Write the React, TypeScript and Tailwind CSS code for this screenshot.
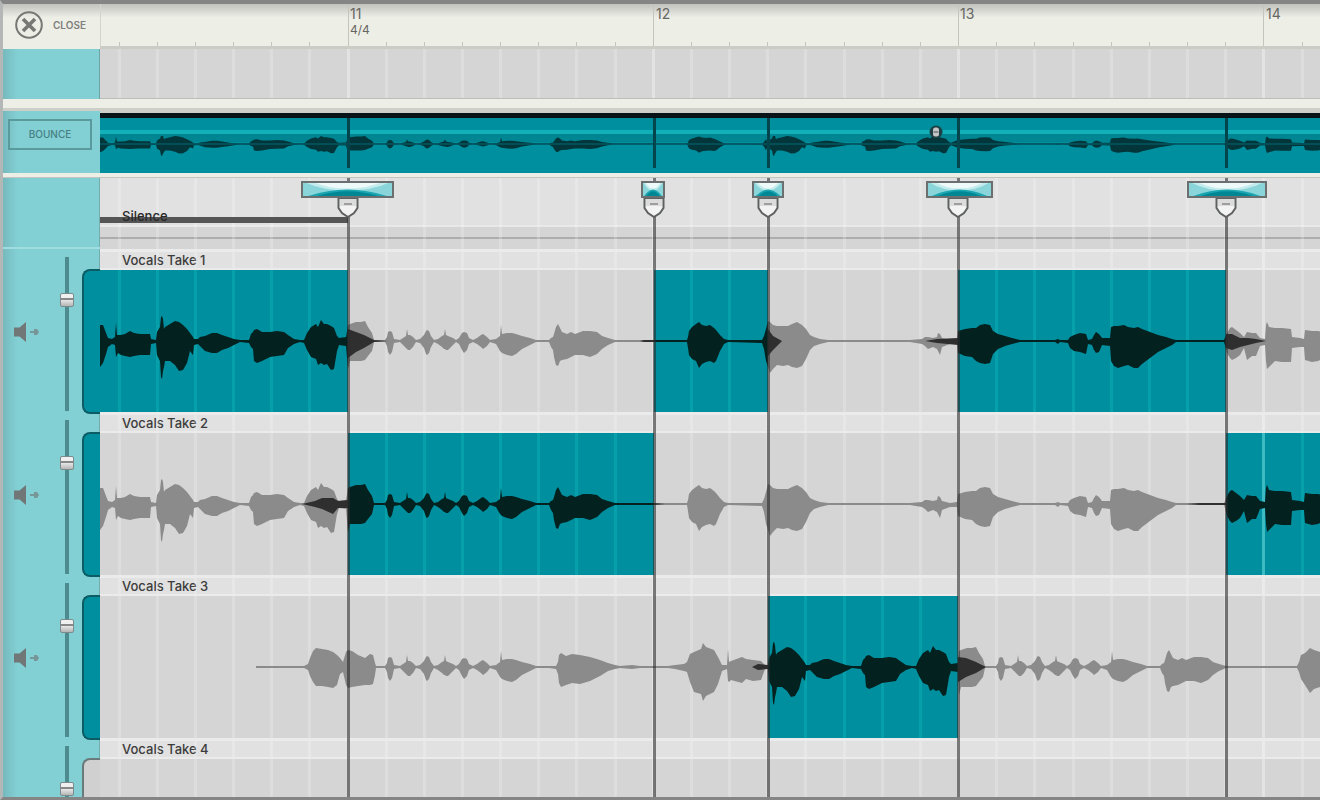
import { useState } from 'react';

// [x, peak above the centre line, peak below it]
type Point = [number, number, number];

interface Region {
  from: number;
  to: number;
}

interface Take {
  name: string;
  wave: Point[];
  regions: Region[];
  tails: Point[][];
  selectable: boolean;
}

// x values are window based, the timeline itself starts after the sidebar
const SIDEBAR = 100;
const BEATS_PER_BAR = 8;

const PHRASES: Point[] = [
  [348, 16, 28], [350, 17, 20], [356, 19, 20], [361, 19, 20], [365, 20, 19], [368, 14, 15], [372, 8, 10], [374, 1, 1],
  [385, 1, 1], [387, 4, 5], [388, 9, 11], [390, 10, 14], [392, 9, 11], [394, 2, 2], [400, 1, 1], [403, 3, 4],
  [406, 5, 7], [407, 12, 8], [408, 6, 9], [410, 6, 9], [413, 4, 6], [416, 1, 1], [420, 2, 2], [424, 6, 7],
  [426, 10, 13], [427, 11, 14], [429, 10, 12], [431, 5, 6], [434, 1, 1], [438, 2, 3], [442, 5, 6], [444, 6, 8],
  [445, 12, 8], [446, 6, 9], [448, 5, 9], [453, 3, 4], [456, 1, 1], [459, 3, 3], [462, 8, 9], [464, 9, 12],
  [467, 8, 9], [469, 3, 3], [473, 1, 1], [477, 3, 3], [481, 6, 6], [483, 7, 8], [487, 4, 5], [490, 1, 1],
  [496, 2, 3], [500, 5, 10], [501, 16, 11], [502, 7, 12], [507, 8, 14], [512, 8, 15], [516, 7, 13], [522, 5, 8],
  [530, 3, 4], [536, 1, 1], [549, 1, 1], [551, 3, 6], [553, 4, 9], [554, 7, 16], [556, 14, 24], [558, 17, 25],
  [560, 13, 20], [562, 9, 19], [567, 7, 18], [571, 9, 16], [575, 7, 14], [583, 10, 14], [590, 10, 16], [597, 9, 13],
  [602, 5, 8], [608, 3, 4], [615, 1, 1],
];

const OPENING: Point[] = [
  [156, 1, 2], [157, 9, 14], [160, 14, 20], [161, 24, 36], [162, 25, 38], [163, 22, 30], [164, 12, 26], [165, 14, 20],
  [170, 17, 20], [175, 20, 24], [179, 19, 30], [183, 16, 29], [187, 12, 22], [190, 8, 10], [193, 4, 14], [194, 2, 4],
  [198, 2, 3], [200, 4, 5], [205, 5, 10], [212, 8, 12], [217, 8, 12], [222, 6, 9], [228, 4, 7], [234, 2, 4],
  [240, 1, 1], [249, 1, 2], [251, 7, 6], [253, 9, 8], [254, 11, 20], [257, 12, 22], [262, 9, 20], [270, 9, 16],
  [277, 10, 15], [284, 9, 14], [288, 6, 7], [294, 2, 3], [300, 1, 1], [304, 1, 2], [307, 8, 9], [311, 14, 16],
  [316, 17, 18], [318, 14, 24], [321, 21, 22], [324, 17, 24], [327, 17, 23], [331, 15, 29], [334, 13, 28], [337, 5, 10],
  [339, 3, 4], [346, 4, 5],
];

const MAIN_WAVE: Point[] = [
  [100, 16, 26], [103, 16, 22], [106, 8, 13], [108, 3, 6], [112, 2, 3], [115, 4, 4], [116, 18, 16], [117, 6, 14],
  [118, 6, 12], [121, 6, 14], [125, 7, 15], [130, 10, 16], [134, 8, 15], [140, 7, 14], [150, 7, 14], [151, 2, 3],
  ...OPENING,
  ...PHRASES,
  [687, 1, 1], [688, 4, 7], [689, 10, 14], [692, 14, 18], [696, 17, 20], [699, 19, 27], [702, 16, 23], [706, 15, 21],
  [710, 16, 20], [714, 13, 22], [716, 11, 20], [720, 6, 10], [724, 2, 3], [728, 1, 1], [762, 1, 2], [764, 5, 8],
  [766, 12, 20], [768, 20, 26], [770, 19, 32], [773, 16, 28], [777, 15, 24], [783, 15, 25], [788, 15, 24], [792, 17, 26],
  [797, 19, 27], [802, 16, 25], [806, 12, 18], [810, 6, 9], [814, 4, 5], [820, 2, 3], [828, 1, 1], [910, 1, 1],
  [922, 2, 3], [925, 4, 5], [928, 4, 8], [933, 3, 6], [937, 4, 8], [938, 8, 10], [940, 7, 14], [942, 3, 6],
  [950, 1, 3], [957, 2, 3], [958, 10, 12], [965, 12, 15], [972, 13, 16], [976, 13, 20], [980, 16, 22], [985, 17, 23],
  [990, 16, 22], [993, 10, 13], [998, 7, 8], [1005, 5, 5], [1012, 3, 3], [1020, 1, 1], [1055, 1, 1], [1058, 2, 3],
  [1060, 1, 1], [1068, 1, 2], [1070, 4, 7], [1074, 6, 10], [1080, 8, 11], [1086, 7, 13], [1088, 1, 3], [1092, 2, 4],
  [1094, 6, 9], [1096, 9, 12], [1099, 7, 11], [1102, 3, 4], [1110, 3, 5], [1111, 14, 20], [1114, 15, 25], [1118, 15, 27],
  [1124, 16, 25], [1128, 14, 24], [1134, 13, 27], [1138, 14, 27], [1142, 12, 23], [1150, 9, 17], [1158, 6, 11],
  [1166, 4, 7], [1172, 2, 4], [1176, 1, 1], [1224, 1, 1], [1227, 8, 12], [1230, 13, 17], [1232, 14, 19], [1236, 11, 17],
  [1240, 8, 14], [1244, 4, 7], [1247, 9, 19], [1252, 8, 15], [1256, 8, 15], [1260, 3, 5], [1265, 2, 4], [1266, 16, 20],
  [1267, 19, 28], [1269, 14, 26], [1275, 13, 20], [1282, 13, 21], [1291, 12, 21], [1292, 4, 7], [1300, 3, 6],
  [1304, 2, 6], [1305, 11, 19], [1312, 10, 21], [1318, 10, 20], [1326, 8, 16], [1330, 1, 1],
];

const shift = (points: Point[], by: number): Point[] => points.map(([x, up, down]) => [x + by, up, down]);
const slice = (points: Point[], from: number, to: number) => points.filter(([x]) => x >= from && x <= to);

const THIRD_WAVE: Point[] = [
  [256, 1, 1], [304, 1, 1], [308, 3, 3], [310, 9, 9], [313, 16, 15], [316, 19, 19], [322, 18, 19], [328, 17, 20],
  [333, 15, 21], [337, 12, 18], [340, 9, 7], [343, 5, 5], [346, 15, 18], [348, 17, 21], [352, 16, 20], [358, 12, 19],
  [365, 9, 18], [370, 13, 18], [373, 12, 17], [375, 4, 8], [376, 1, 1],
  ...slice(PHRASES, 384, 549),
  [556, 1, 2], [558, 5, 7], [559, 12, 16], [561, 14, 20], [566, 11, 18], [572, 13, 16], [580, 12, 17], [590, 10, 14],
  [600, 7, 9], [608, 4, 4], [615, 2, 2], [620, 1, 1], [632, 2, 2], [640, 1, 1], [668, 1, 1], [675, 2, 2],
  [684, 3, 4], [687, 5, 5], [690, 13, 15], [694, 15, 25], [701, 18, 27], [703, 24, 34], [706, 20, 29], [714, 17, 25],
  [718, 10, 17], [722, 2, 4], [727, 2, 2], [728, 18, 14], [729, 5, 15], [731, 6, 13], [742, 10, 16], [746, 8, 12],
  [753, 7, 14], [761, 6, 13], [765, 2, 2],
  ...shift(OPENING, 612),
  ...shift(PHRASES, 611),
  [1297, 1, 1], [1299, 5, 5], [1301, 12, 12], [1305, 14, 18], [1310, 19, 26], [1314, 17, 22], [1320, 15, 20], [1330, 1, 1],
];

const BOUNCE_WAVE: Point[] = [
  ...slice(MAIN_WAVE, 100, 767),
  ...slice(THIRD_WAVE, 768, 957),
  ...slice(MAIN_WAVE, 958, 1330),
].map(([x, up, down]) => [x, Math.min(up * 0.4, 8), Math.min(down * 0.32, 12)]);

const TAKES: Take[] = [
  {
    name: 'Vocals Take 1',
    wave: MAIN_WAVE,
    regions: [{ from: 100, to: 348 }, { from: 654, to: 768 }, { from: 958, to: 1226 }],
    tails: [
      [[348, 12, 17], [356, 9, 11], [364, 6, 7], [374, 1, 1], [388, 0, 0]],
      [[640, 0, 0], [644, 1, 1], [654, 1, 1]],
      [[768, 12, 15], [773, 5, 9], [782, 0, 0]],
      [[925, 0, 0], [937, 2, 2], [958, 3, 4]],
      [[1226, 7, 7], [1232, 7, 9], [1240, 3, 6], [1248, 3, 4], [1256, 2, 2], [1266, 0, 0]],
    ],
    selectable: true,
  },
  {
    name: 'Vocals Take 2',
    wave: MAIN_WAVE,
    regions: [{ from: 348, to: 654 }, { from: 1226, to: 1400 }],
    tails: [
      [[302, 0, 0], [315, 3, 3], [322, 6, 5], [333, 6, 10], [338, 3, 4], [348, 4, 4]],
      [[654, 1, 1], [665, 0, 0]],
      [[1187, 0, 0], [1200, 1, 1], [1226, 1, 1]],
    ],
    selectable: true,
  },
  {
    name: 'Vocals Take 3',
    wave: THIRD_WAVE,
    regions: [{ from: 768, to: 958 }],
    tails: [
      [[752, 0, 0], [758, 3, 3], [768, 2, 2]],
      [[958, 10, 15], [966, 9, 10], [976, 5, 6], [986, 0, 0]],
    ],
    selectable: true,
  },
  { name: 'Vocals Take 4', wave: [], regions: [], tails: [], selectable: false },
];

const BARS = [
  { x: 348, label: '11', meter: '4/4' },
  { x: 654, label: '12' },
  { x: 958, label: '13' },
  { x: 1264, label: '14' },
];

const EDITS = [
  { x: 348, left: 301, width: 93 },
  { x: 654, left: 641, width: 24 },
  { x: 768, left: 752, width: 32 },
  { x: 958, left: 926, width: 67 },
  { x: 1226, left: 1187, width: 80 },
];

const BEATS = Array.from({ length: 36 }, (_, i) => ({
  x: Math.floor(348 + ((i - 6) * 305.3) / BEATS_PER_BAR),
  bar: (i - 6) % BEATS_PER_BAR === 0,
}));

function wavePath(points: Point[]) {
  const top = points.map(([x, up]) => `${x} ${-up}`);
  const bottom = points.map(([x, , down]) => `${x} ${down}`).reverse();
  return `M${[...top, ...bottom].join('L')}Z`;
}

function Grid() {
  return (
    <div className="pointer-events-none absolute inset-0 overflow-hidden">
      {BEATS.map((beat) => (
        <div
          key={beat.x}
          className={beat.bar ? 'absolute inset-y-0 w-[3px] bg-white/35' : 'absolute inset-y-0 w-[3px] bg-white/20'}
          style={{ left: beat.x - 1 - SIDEBAR }}
        />
      ))}
    </div>
  );
}

function CloseIcon() {
  return (
    <svg className="h-7 w-7" viewBox="0 0 28 28" fill="none" stroke="#777874">
      <circle cx="14" cy="14" r="12.8" strokeWidth="2" />
      <path d="M8 8L20 20M20 8L8 20" strokeWidth="3.600" />
    </svg>
  );
}

function SpeakerIcon() {
  return (
    <svg className="h-5 w-[26px]" viewBox="0 0 26 20" fill="#717777">
      <path d="M0 5.5h5.5L12 0v20l-6.500-5.500H0Z" />
      <path d="M16 9h4V7h3l2 3-2 3h-3v-2h-4Z" opacity="0.65" />
    </svg>
  );
}

function Ruler() {
  return (
    <div className="relative flex-1 overflow-hidden border-b-[3px] border-l border-[#cbccc5] border-l-[#d3d4cd]">
      {BEATS.map((beat) => (
        <div
          key={beat.x}
          className={beat.bar ? 'absolute inset-y-0 w-px bg-[#c4c5bf]' : 'absolute bottom-0 h-1 w-px bg-[#c4c5bf]'}
          style={{ left: beat.x - SIDEBAR - 1 }}
        />
      ))}
      {BARS.map((bar) => (
        <div
          key={bar.label}
          className="absolute top-0.5 text-sm text-[#666763]"
          style={{ left: bar.x + 1 - SIDEBAR }}
        >
          <div className="leading-4">{bar.label}</div>
          {bar.meter && <div className="text-xs leading-4">{bar.meter}</div>}
        </div>
      ))}
    </div>
  );
}

function BounceTrack() {
  return (
    <div className="relative flex-1 overflow-hidden border-t-[5px] border-[#081417] bg-[#008f9e]">
      <div className="absolute inset-x-0 top-3 h-1 bg-[#12b0b8]" />
      <div className="absolute inset-x-0 top-4 h-2 bg-[#008592]" />
      <svg className="absolute left-0 top-3 h-7 w-[1230px]" viewBox="100 -14 1230 28" fill="#03363b">
        <path d={wavePath(BOUNCE_WAVE)} />
        <path d="M100 0H1330" stroke="#045963" strokeWidth="1.500" />
      </svg>
      {EDITS.map((edit) => (
        <div
          key={edit.x}
          className="absolute top-0 h-[50px] w-[3px] bg-[#04444c]"
          style={{ left: edit.x - 1 - SIDEBAR }}
        />
      ))}
      <svg className="absolute left-[829px] top-[7px] h-3.5 w-3.5" viewBox="0 0 14 14">
        <circle cx="7" cy="7" r="6.500" fill="#1d4044" />
        <rect x="4" y="2.500" width="6" height="9" rx="2.500" fill="#c3c6c5" />
        <path d="M4.500 7H9.500" stroke="#6f7776" strokeWidth="1.500" />
      </svg>
    </div>
  );
}

function EditHandle({ x, left, width }: { x: number; left: number; width: number }) {
  return (
    <>
      <div className="absolute inset-y-0 w-[3px] bg-[#2c2c2c]/60" style={{ left: x - 1 - SIDEBAR }} />
      <button
        type="button"
        aria-label="Crossfade"
        className="pointer-events-auto absolute top-[3px] h-[17px] border-2 border-[#6b6f6f] bg-[#8ad5d9]"
        style={{ left: left - SIDEBAR, width }}
      >
        <svg className="block h-full w-full" viewBox="0 0 100 14" preserveAspectRatio="none">
          <path d="M4 0H96Q78 8 50 8T4 0Z" fill="#c4ebed" />
          <path d="M14 0H86Q70 6 50 6T14 0Z" fill="#eef9f9" />
          <path d="M6 14Q28 7 50 7T94 14Z" fill="#1ba5b0" />
          <path d="M16 14Q34 9 50 9T84 14Z" fill="#008794" />
        </svg>
      </button>
      <svg className="absolute top-5 h-5 w-[22px]" style={{ left: x - 11 - SIDEBAR }} viewBox="0 0 22 20">
        <path d="M1.500 0V10L5 15L11 19L17 15L20.500 10V0Z" fill="#f3f3f3" stroke="#5f6060" strokeWidth="2" />
        <path d="M3 1H19V8H3Z" fill="#dcdcdc" />
        <path d="M7 6H15" stroke="#8a8a8a" strokeWidth="1.500" />
      </svg>
    </>
  );
}

function TakeControls({ take }: { take: Take }) {
  const [volume, setVolume] = useState(74);
  const [muted, setMuted] = useState(false);

  return (
    <div className="relative flex w-[97px] shrink-0">
      <button
        type="button"
        aria-label={`Mute ${take.name}`}
        aria-pressed={muted}
        onClick={() => setMuted(!muted)}
        className="ml-[11px] mt-[73px] h-5 w-[26px]"
      >
        <SpeakerIcon />
      </button>
      <input
        type="range"
        aria-label={`${take.name} volume`}
        value={volume}
        onChange={(e) => setVolume(Number(e.target.value))}
        className="ml-5 mt-2 h-[154px] w-[14px] appearance-none bg-[linear-gradient(90deg,transparent_5px,#4d8b8e_5px,#4d8b8e_9px,transparent_9px)] [direction:rtl] [writing-mode:vertical-lr] [&::-webkit-slider-thumb]:h-[14px] [&::-webkit-slider-thumb]:w-[14px] [&::-webkit-slider-thumb]:appearance-none [&::-webkit-slider-thumb]:rounded-xs [&::-webkit-slider-thumb]:border [&::-webkit-slider-thumb]:border-[#7c8c8d] [&::-webkit-slider-thumb]:bg-[linear-gradient(#f0f0f0_4px,#888_4px,#888_6px,#e8e8e8_6px,#b5b5b5)]"
      />
      <div
        className={
          take.selectable
            ? 'absolute right-0 top-5 h-[145px] w-[18px] rounded-l-lg border-y-2 border-l-2 border-[#0b5c65] bg-[#008f9e]'
            : 'absolute right-0 top-5 h-[145px] w-[18px] rounded-l-lg border-y-2 border-l-2 border-[#6a7a7b] bg-[#d0d0d0]'
        }
      />
    </div>
  );
}

function ActiveRegion({ from, to, wave }: { from: number; to: number; wave: Point[] }) {
  return (
    <div
      className="absolute inset-y-0 overflow-hidden bg-[#008f9e]"
      style={{ left: from - SIDEBAR, width: to - from }}
    >
      {BEATS.filter((beat) => beat.x > from + 2 && beat.x < to - 2).map((beat) => (
        <div
          key={beat.x}
          className={beat.bar ? 'absolute inset-y-0 w-[3px] bg-[#3dbbc3]' : 'absolute inset-y-0 w-[3px] bg-[#06a0ab]'}
          style={{ left: beat.x - 1 - from }}
        />
      ))}
      <svg className="absolute left-0 top-0 h-[142px] w-full" viewBox={`${from} -71 ${to - from} 142`}>
        <path d={wavePath(wave)} fill="#02211f" />
      </svg>
    </div>
  );
}

function TakeLane({ take }: { take: Take }) {
  return (
    <div className="flex flex-1 flex-col overflow-hidden">
      <div className="relative h-[21px] border-b-2 border-t-[3px] border-[#ebebeb] bg-[#e1e1e1] pl-[22px] text-[13px] font-medium leading-4 text-[#3c3c3c]">
        <Grid />
        {take.name}
      </div>
      <div className="relative flex-1 bg-[#d5d5d5]">
        <Grid />
        {take.wave.length > 0 && (
          <svg className="absolute left-0 top-0 h-[142px] w-[1230px]" viewBox="100 -71 1230 142">
            <path d={wavePath(take.wave)} fill="#8b8b8b" />
            {take.tails.map((tail) => (
              <path key={tail[0][0]} d={wavePath(tail)} fill="#2f2f2f" />
            ))}
          </svg>
        )}
        {take.regions.map((region) => (
          <ActiveRegion key={region.from} {...region} wave={take.wave} />
        ))}
      </div>
    </div>
  );
}

export default function App() {
  return (
    <div className="relative flex h-screen flex-col overflow-hidden border-b-[3px] border-l-[3px] border-t-4 border-[#858585] border-l-[#b3b8b7] bg-[#edeee6] font-['Inter',sans-serif]">
      <header className="flex h-[45px] shrink-0 bg-linear-to-b from-[#c2c2be] to-[#edeee6] to-30%">
        <button type="button" className="flex w-[97px] shrink-0 items-center gap-2.5 pb-[3px] pl-3 text-[10px] font-semibold text-[#80817d]">
          <CloseIcon />
          CLOSE
        </button>
        <Ruler />
      </header>

      <div className="flex h-[50px] shrink-0">
        <div className="w-[97px] shrink-0 border-r border-[#6fa5a8] bg-linear-to-r from-[#76b9bd] to-[#82d0d4] to-15%" />
        <div className="relative flex-1 border-b border-[#bdbdb9] bg-[#d5d5d5]">
          <Grid />
        </div>
      </div>

      <div className="h-3 shrink-0 border-b-[3px] border-[#cfcfca]" />

      <div className="flex h-[62px] shrink-0">
        <div className="w-[97px] shrink-0 bg-linear-to-r from-[#76b9bd] to-[#82d0d4] to-15% pl-[5px] pr-2 pt-2">
          <button type="button" className="h-[31px] w-full border-2 border-[#5a999c] text-[10px] font-medium text-[#477f83]">
            BOUNCE
          </button>
        </div>
        <div className="flex flex-1 border-t-2 border-[#cfcfca]">
          <BounceTrack />
        </div>
      </div>

      <div className="h-[5px] shrink-0 border-b border-[#c4c4c0]" />

      <main className="relative min-h-0 flex-1 overflow-hidden">
        <div className="absolute inset-y-0 left-0 w-[97px] border-r border-[#74adb0] bg-linear-to-r from-[#76b9bd] to-[#82d0d4] to-15%" />
        <section className="relative flex h-[71px]">
          <div className="w-[97px] shrink-0 border-b-2 border-[#a0dde0]" />
          <div className="relative flex flex-1 flex-col bg-[#d5d5d5]">
            <div className="h-[49px] border-b-2 border-[#e9e9e9] bg-[#e1e1e1]" />
            <div className="h-3 border-b-2 border-[#adadad]" />
            <Grid />
            <div className="absolute left-0 top-[39px] h-1.5 w-[248px] bg-[#555]" />
            <div className="absolute left-[22px] top-[30px] text-[13px] font-medium leading-4 text-[#2a2a2a]">Silence</div>
          </div>
        </section>

        {TAKES.map((take) => (
          <section key={take.name} className="relative flex h-[163px]">
            <TakeControls take={take} />
            <TakeLane take={take} />
          </section>
        ))}

        <div className="pointer-events-none absolute inset-y-0 left-[97px] right-0 overflow-hidden">
          {EDITS.map((edit) => (
            <EditHandle key={edit.x} {...edit} />
          ))}
        </div>
      </main>
    </div>
  );
}
